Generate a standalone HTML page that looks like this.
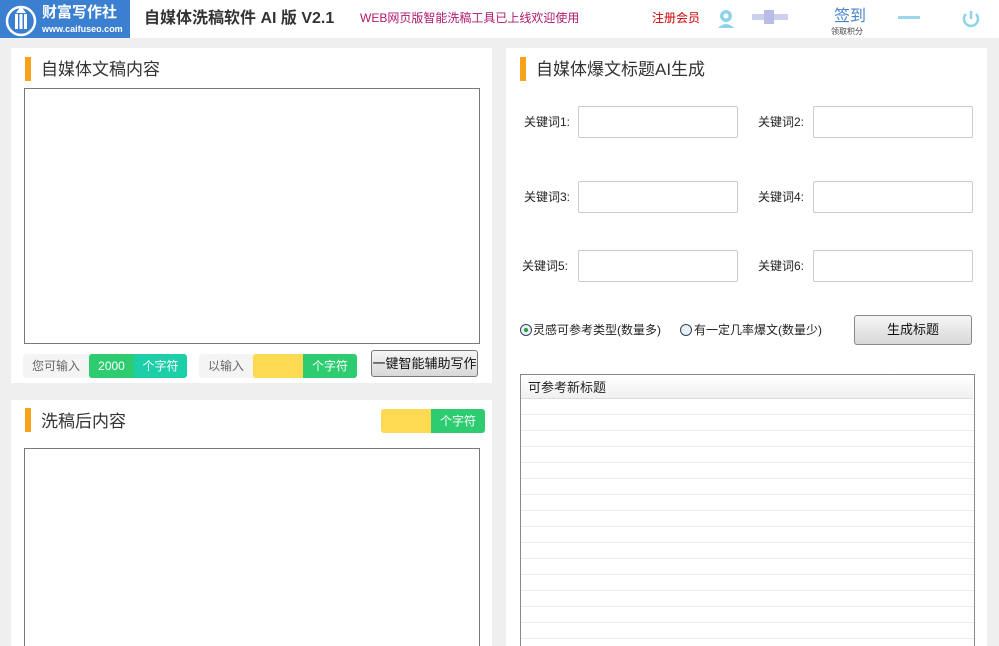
<!DOCTYPE html>
<html style="overflow:hidden;width:999px;height:646px"><head><meta charset="utf-8"><style>
*{margin:0;padding:0;box-sizing:border-box}
body{width:999px;height:646px;overflow:hidden;background:#efefef;font-family:"Liberation Sans","Noto Sans CJK SC",sans-serif;position:relative;font-size:12px;color:#333;line-height:1.15}
.a{position:absolute}
.panel{position:absolute;background:#fff}
.bar{position:absolute;width:6px;height:24px;background:#f7a21b}
.title{position:absolute;font-size:17px;color:#333}
.inp{position:absolute;border:1px solid #ccc;border-radius:2px;background:#fff}
.lbl{position:absolute;font-size:12px;color:#222}
</style></head><body>
<div class="a" style="left:0;top:0;width:999px;height:38px;background:#fff"></div>
<div class="a" style="left:0;top:0;width:130px;height:38px;background:#3b80d0"></div>
<svg class="a" style="left:4px;top:3px" width="34" height="34" viewBox="0 0 34 34"><circle cx="17" cy="18" r="14" fill="none" stroke="#fff" stroke-width="2.5"/><path d="M17 3 L12 10 H22 Z" fill="#fff"/><rect x="11" y="11" width="3" height="15" fill="#fff"/><rect x="15.5" y="11" width="3" height="15" fill="#fff"/><rect x="20" y="11" width="3" height="15" fill="#fff"/></svg>
<div class="a" style="left:42px;top:4px;color:#fff;font-size:15px;font-weight:bold">财富写作社</div>
<div class="a" style="left:42px;top:24px;color:#fff;font-size:9px;font-weight:bold">www.caifuseo.com</div>
<div class="a" style="left:144px;top:10px;font-size:16px;font-weight:bold;color:#333">自媒体洗稿软件 AI 版 V2.1</div>
<div class="a" style="left:360px;top:12px;font-size:12px;color:#b0186e">WEB网页版智能洗稿工具已上线欢迎使用</div>
<div class="a" style="left:652px;top:12px;font-size:12px;color:#c00">注册会员</div>
<svg class="a" style="left:715px;top:8px" width="22" height="22"><circle cx="11" cy="8" r="6" fill="#8fd3ea"/><circle cx="11" cy="8" r="2.5" fill="#fff"/><path d="M3 20 Q11 12 19 20Z" fill="#8fd3ea"/></svg>
<div class="a" style="left:752px;top:14px;width:36px;height:6px;background:#ccd0ef"></div>
<div class="a" style="left:764px;top:10px;width:10px;height:14px;background:#b8bce6"></div>
<div class="a" style="left:834px;top:8px;font-size:16px;color:#4a86c8">签到</div>
<div class="a" style="left:831px;top:27px;font-size:8px;color:#444">领取积分</div>
<div class="a" style="left:898px;top:16px;width:22px;height:3px;background:#9dd6ec"></div>
<svg class="a" style="left:961px;top:8px" width="20" height="20"><path d="M5 6 A7 7 0 1 0 15 6" fill="none" stroke="#8fd3ea" stroke-width="2.5"/><line x1="10" y1="3" x2="10" y2="11" stroke="#8fd3ea" stroke-width="2.5"/></svg>

<div class="panel" style="left:11px;top:48px;width:481px;height:335px"></div>
<div class="bar" style="left:25px;top:57px"></div>
<div class="title" style="left:41px;top:60px">自媒体文稿内容</div>
<div class="a" style="left:24px;top:88px;width:456px;height:256px;border:1px solid #777;background:#fff"></div>
<div class="a" style="left:23px;top:354px;width:164px;height:24px;background:#f4f4f4;border-radius:3px"></div>
<div class="lbl" style="left:32px;top:360px;color:#666">您可输入</div>
<div class="a" style="left:89px;top:354px;width:45px;height:24px;background:#2ecc71;color:#fff;text-align:center;line-height:24px;border-radius:3px 0 0 3px">2000</div>
<div class="a" style="left:134px;top:354px;width:53px;height:24px;background:#1ccfa8;color:#fff;text-align:center;line-height:24px;border-radius:0 3px 3px 0">个字符</div>
<div class="a" style="left:199px;top:354px;width:158px;height:24px;background:#f4f4f4;border-radius:3px"></div>
<div class="lbl" style="left:208px;top:360px;color:#666">以输入</div>
<div class="a" style="left:253px;top:354px;width:50px;height:24px;background:#fed952;border-radius:3px 0 0 3px"></div>
<div class="a" style="left:303px;top:354px;width:54px;height:24px;background:#2ecc71;color:#fff;text-align:center;line-height:24px;border-radius:0 3px 3px 0">个字符</div>
<div class="a" style="left:371px;top:350px;width:107px;height:27px;border:1px solid #777;border-radius:3px;background:linear-gradient(#f6f6f6,#d8d8d8);font-size:13px;color:#111;text-align:center;line-height:25px;white-space:nowrap;overflow:hidden">一键智能辅助写作</div>

<div class="panel" style="left:11px;top:400px;width:481px;height:246px"></div>
<div class="bar" style="left:25px;top:408px"></div>
<div class="title" style="left:41px;top:412px">洗稿后内容</div>
<div class="a" style="left:381px;top:409px;width:50px;height:24px;background:#fed952;border-radius:3px 0 0 3px"></div>
<div class="a" style="left:431px;top:409px;width:54px;height:24px;background:#2ecc71;color:#fff;text-align:center;line-height:24px;border-radius:0 3px 3px 0">个字符</div>
<div class="a" style="left:24px;top:448px;width:456px;height:198px;border:1px solid #777;border-bottom:none;background:#fff"></div>

<div class="panel" style="left:506px;top:48px;width:481px;height:598px"></div>
<div class="bar" style="left:520px;top:57px"></div>
<div class="title" style="left:536px;top:60px">自媒体爆文标题AI生成</div>
<div class="lbl" style="left:524px;top:116px">关键词1:</div><div class="inp" style="left:578px;top:106px;width:160px;height:32px"></div>
<div class="lbl" style="left:758px;top:116px">关键词2:</div><div class="inp" style="left:813px;top:106px;width:160px;height:32px"></div>
<div class="lbl" style="left:524px;top:191px">关键词3:</div><div class="inp" style="left:578px;top:181px;width:160px;height:32px"></div>
<div class="lbl" style="left:758px;top:191px">关键词4:</div><div class="inp" style="left:813px;top:181px;width:160px;height:32px"></div>
<div class="lbl" style="left:522px;top:260px">关键词5:</div><div class="inp" style="left:578px;top:250px;width:160px;height:32px"></div>
<div class="lbl" style="left:758px;top:260px">关键词6:</div><div class="inp" style="left:813px;top:250px;width:160px;height:32px"></div>
<div class="a" style="left:520px;top:324px;width:12px;height:12px;border:1px solid #345;border-radius:50%;background:#e8f0f8"></div>
<div class="a" style="left:524px;top:328px;width:4px;height:4px;border-radius:50%;background:#2a9a3a"></div>
<div class="lbl" style="left:533px;top:324px">灵感可参考类型(数量多)</div>
<div class="a" style="left:680px;top:324px;width:12px;height:12px;border:1px solid #345;border-radius:50%;background:#e8f0f8"></div>
<div class="lbl" style="left:694px;top:324px">有一定几率爆文(数量少)</div>
<div class="a" style="left:854px;top:315px;width:118px;height:30px;border:1px solid #888;border-radius:3px;background:linear-gradient(#f6f6f6,#d8d8d8);font-size:13px;color:#111;text-align:center;line-height:28px">生成标题</div>
<div class="a" style="left:520px;top:374px;width:455px;height:272px;border:1px solid #888;border-bottom:none;background:#fff repeating-linear-gradient(#fff 0 15px,#ececec 15px 16px);background-position:0 24px"></div>
<div class="a" style="left:521px;top:375px;width:452px;height:24px;background:linear-gradient(#fff,#f0f0f0);border-bottom:1px solid #ddd;font-size:13px;color:#222;padding:6px 0 0 7px">可参考新标题</div>
</body></html>
